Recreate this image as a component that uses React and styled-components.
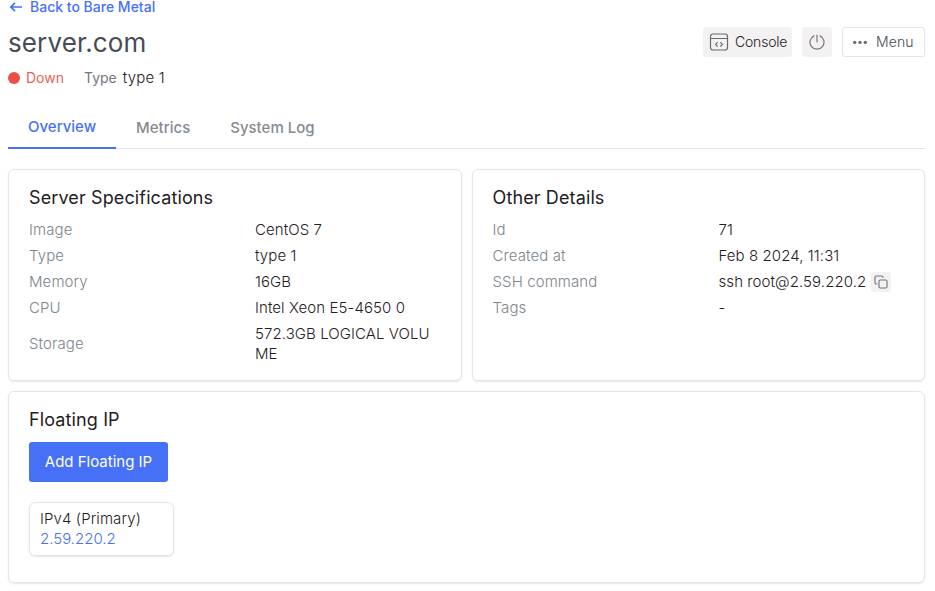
import React from "react";
import styled, { createGlobalStyle } from "styled-components";

const GlobalStyle = createGlobalStyle`
  * { box-sizing: border-box; }
  body {
    margin: 0;
    background: #fff;
    color: #1f2023;
    font: 400 15px/20px Inter, "Liberation Sans", sans-serif;
  }
  button { font: inherit; border: 0; padding: 0; cursor: pointer; }
`;

const Page = styled.main`
  width: 100%;
  height: 591px;
  padding: 0 10px 8px 8px;
  display: flex;
  flex-direction: column;
`;

const BackLink = styled.a`
  display: flex;
  align-items: center;
  gap: 7px;
  height: 14px;
  color: #4671f6;
  font-size: 14px;
  line-height: 14px;
  font-weight: 500;
  svg { width: 15px; height: 14px; flex: none; }
`;

const Header = styled.header`
  display: flex;
  align-items: center;
  justify-content: space-between;
  height: 30px;
  margin-top: 13px;
`;

const Title = styled.h1`
  margin: 2px 0 0;
  color: #464c54;
  font-size: 26px;
  line-height: 32px;
  font-weight: 400;
  letter-spacing: 0.12px;
`;

const Actions = styled.div`
  display: flex;
  gap: 10px;
`;

const ActionButton = styled.button`
  display: flex;
  align-items: center;
  justify-content: flex-start;
  gap: ${(p) => p.$gap || 0}px;
  padding-left: ${(p) => p.$inset}px;
  width: ${(p) => p.$width}px;
  height: 30px;
  border-radius: 3px;
  font-size: 14px;
  font-weight: ${(p) => (p.$outlined ? 350 : 300)};
  letter-spacing: ${(p) => (p.$outlined ? 0.1 : -0.2)}px;
  line-height: 20px;
  color: ${(p) => (p.$outlined ? "#464c54" : "#1f2023")};
  background: ${(p) => (p.$outlined ? "#fff" : "#f3f1f2")};
  border: 1px solid ${(p) => (p.$outlined ? "#e4e4e5" : "#f3f1f2")};
  svg { flex: none; }
`;

const Meta = styled.div`
  display: flex;
  align-items: center;
  height: 20px;
  margin-top: 11px;
`;

const StatusDot = styled.span`
  width: 12px;
  height: 12px;
  border-radius: 50%;
  background: #ea5048;
  margin-right: 6px;
`;

const Status = styled.span`
  color: #e5645a;
  font-size: 14px;
  margin-right: 20px;
`;

const MetaLabel = styled.span`
  color: #73777c;
  font-size: 14px;
  margin-right: 6px;
`;

const MetaValue = styled.span`
  font-weight: 300;
  letter-spacing: 0.2px;
`;

const Tabs = styled.nav`
  display: flex;
  height: 42px;
  flex: none;
  margin-top: 19px;
  border-bottom: 1px solid #e4e4e5;
`;

const Tab = styled.a`
  height: 42px;
  padding: ${(p) => (p.$active ? 10 : 11)}px 20px 0;
  font-weight: 500;
  color: ${(p) => (p.$active ? "#4671f6" : "#868a91")};
  border-bottom: ${(p) => (p.$active ? "2px solid #4671f6" : "0")};
`;

const Panels = styled.section`
  display: grid;
  grid-template-columns: 1fr 1fr;
  grid-template-rows: 212px 192px;
  gap: 10px;
  margin-top: 20px;
`;

const Card = styled.article`
  padding: 18px 20px;
  border: 1px solid #e4e4e5;
  border-radius: 6px;
  box-shadow: 0 1px 2px rgba(0, 0, 0, 0.1);
  grid-column: ${(p) => (p.$wide ? "1 / -1" : "auto")};
`;

const CardTitle = styled.h2`
  margin: 0 0 12px;
  font-size: 18px;
  line-height: 20px;
  font-weight: 400;
  letter-spacing: 0.12px;
`;

const Details = styled.dl`
  display: grid;
  grid-template-columns: 226px 1fr;
  row-gap: 6px;
  margin: 0;
  align-items: center;
`;

const Label = styled.dt`
  color: #80858c;
  font-weight: 350;
  letter-spacing: 0.1px;
`;

const Value = styled.dd`
  display: flex;
  align-items: center;
  gap: 5px;
  margin: 0;
  font-weight: 300;
  letter-spacing: 0.08px;
`;

const ValueText = styled.span`
  max-width: 176px;
  word-break: break-all;
`;

const CopyButton = styled.button`
  display: grid;
  place-items: center;
  width: 20px;
  height: 20px;
  border-radius: 3px;
  background: #f3f1f2;
  color: #73777c;
`;

const PrimaryButton = styled.button`
  display: block;
  width: 139px;
  height: 40px;
  border-radius: 3px;
  background: #4671f6;
  color: #fff;
`;

const IpCard = styled.div`
  width: 145px;
  height: 54px;
  margin-top: 20px;
  padding: 6px 10px;
  border: 1px solid #e4e4e5;
  border-radius: 6px;
  box-shadow: 0 1px 2px rgba(0, 0, 0, 0.1);
  font-weight: 300;
  letter-spacing: 0.1px;
`;

const IpLink = styled.a`
  display: block;
  color: #4671f6;
  letter-spacing: 0;
`;

const ArrowIcon = () => (
  <svg viewBox="0 0 15 14" fill="none" stroke="currentColor" strokeWidth="1.7">
    <path d="M14 7H2.8M7 2.8 2.8 7 7 11.2" />
  </svg>
);

const ConsoleIcon = () => (
  <svg width="20" height="20" viewBox="0 0 20 20" fill="none" stroke="#686b70" strokeWidth="1.2" strokeLinecap="round" strokeLinejoin="round">
    <rect x="1.5" y="2" width="17" height="16" rx="2.5" />
    <path d="M1.5 6.5h17M8.400 10.600 6.500 12.400l1.900 1.800M11.600 10.600l1.900 1.800-1.900 1.800" />
  </svg>
);

const PowerIcon = () => (
  <svg width="16" height="16" viewBox="0 0 16 16" fill="none" stroke="#77797d" strokeWidth="1.2" strokeLinecap="round">
    <path d="M8 1v7M5 1.9a7 7 0 1 0 6 0" />
  </svg>
);

const MoreIcon = () => (
  <svg width="16" height="16" viewBox="0 0 16 16" fill="#6c6e72">
    <circle cx="2.7" cy="8.4" r="1.7" />
    <circle cx="8" cy="8.4" r="1.7" />
    <circle cx="13.3" cy="8.4" r="1.7" />
  </svg>
);

const CopyIcon = () => (
  <svg width="14" height="14" viewBox="0 0 14 14" fill="none" stroke="currentColor" strokeWidth="1.15" strokeLinejoin="round" strokeLinecap="round">
    <rect x="5" y="5" width="8" height="8" rx="1.2" />
    <path d="M3 9h-.5A1.5 1.5 0 0 1 1 7.500V2.500A1.500 1.500 0 0 1 2.500 1h5A1.500 1.500 0 0 1 9 2.500" />
  </svg>
);

const specifications = [
  ["Image", "CentOS 7"],
  ["Type", "type 1"],
  ["Memory", "16GB"],
  ["CPU", "Intel Xeon E5-4650 0"],
  ["Storage", "572.3GB LOGICAL VOLUME"],
];

const otherDetails = [
  ["Id", "71"],
  ["Created at", "Feb 8 2024, 11:31"],
  ["SSH command", "ssh root@2.59.220.2", true],
  ["Tags", "-"],
];

function DetailCard({ title, rows }) {
  return (
    <Card>
      <CardTitle>{title}</CardTitle>
      <Details>
        {rows.map(([label, value, copyable]) => (
          <React.Fragment key={label}>
            <Label>{label}</Label>
            <Value>
              <ValueText>{value}</ValueText>
              {copyable && <CopyButton aria-label="Copy"><CopyIcon /></CopyButton>}
            </Value>
          </React.Fragment>
        ))}
      </Details>
    </Card>
  );
}

export default function App() {
  return (
    <>
      <GlobalStyle />
      <Page>
        <BackLink><ArrowIcon />Back to Bare Metal</BackLink>
        <Header>
          <Title>server.com</Title>
          <Actions>
            <ActionButton $width={89} $inset={5} $gap={6}><ConsoleIcon />Console</ActionButton>
            <ActionButton $width={30} $inset={6} aria-label="Power"><PowerIcon /></ActionButton>
            <ActionButton $width={83} $inset={9} $gap={8} $outlined><MoreIcon />Menu</ActionButton>
          </Actions>
        </Header>
        <Meta>
          <StatusDot />
          <Status>Down</Status>
          <MetaLabel>Type</MetaLabel>
          <MetaValue>type 1</MetaValue>
        </Meta>
        <Tabs>
          <Tab $active>Overview</Tab>
          <Tab>Metrics</Tab>
          <Tab>System Log</Tab>
        </Tabs>
        <Panels>
          <DetailCard title="Server Specifications" rows={specifications} />
          <DetailCard title="Other Details" rows={otherDetails} />
          <Card $wide>
            <CardTitle>Floating IP</CardTitle>
            <PrimaryButton>Add Floating IP</PrimaryButton>
            <IpCard>
              <span>IPv4 (Primary)</span>
              <IpLink>2.59.220.2</IpLink>
            </IpCard>
          </Card>
        </Panels>
      </Page>
    </>
  );
}
